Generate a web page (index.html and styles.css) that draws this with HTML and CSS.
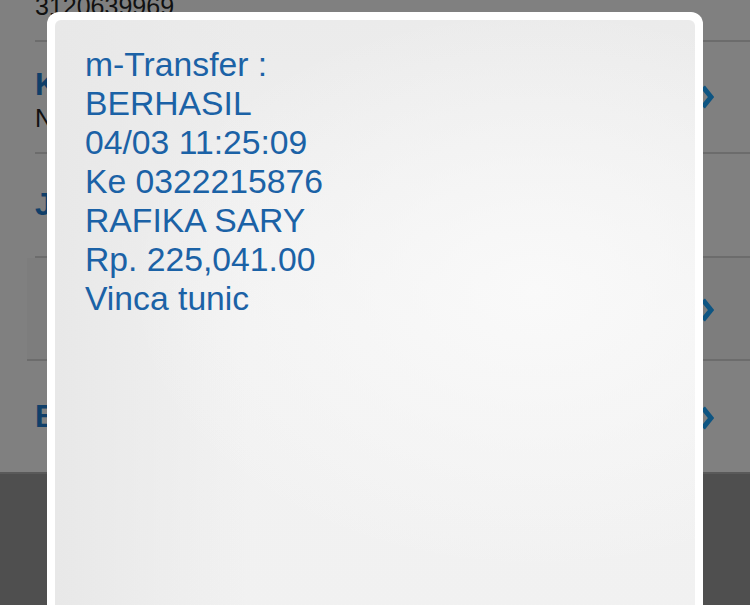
FILE: index.html
```html
<!DOCTYPE html>
<html>
<head>
<meta charset="utf-8">
<link rel="stylesheet" href="styles.css">
</head>
<body>
<div class="screen">
  <div class="list">
    <div class="row row-top"><span class="plain">3120639969</span></div>
    <div class="row row-a">
      <div class="texts">
        <div class="title">Kirim</div>
        <div class="plain">Nomor Rekening</div>
      </div>
      <svg class="chev" viewBox="0 0 14 24" width="14" height="24"><polyline points="3,2 11,12 3,22" fill="none" stroke="#0e5582" stroke-width="5"/></svg>
    </div>
    <div class="row row-b">
      <div class="texts"><div class="title">Jumlah</div></div>
    </div>
    <div class="row row-c">
      <div class="boxed"></div>
      <svg class="chev" viewBox="0 0 14 24" width="14" height="24"><polyline points="3,2 11,12 3,22" fill="none" stroke="#0e5582" stroke-width="5"/></svg>
    </div>
    <div class="row row-d">
      <div class="texts"><div class="title">Berita</div></div>
      <svg class="chev" viewBox="0 0 14 24" width="14" height="24"><polyline points="3,2 11,12 3,22" fill="none" stroke="#0e5582" stroke-width="5"/></svg>
    </div>
  </div>
  <div class="footer"></div>

  <div class="modal">
    <div class="panel">
      <p class="msg">m-Transfer :<br>BERHASIL<br>04/03 11:25:09<br>Ke 0322215876<br>RAFIKA SARY<br>Rp. 225,041.00<br>Vinca tunic</p>
    </div>
  </div>
</div>
</body>
</html>
```

FILE: styles.css
```css
html, body {
  margin: 0;
  padding: 0;
}
body {
  width: 750px;
  height: 605px;
  overflow: hidden;
  background: #808080;
  font-family: "Liberation Sans", Arial, sans-serif;
}
.screen {
  position: relative;
  width: 750px;
  height: 605px;
  display: flex;
  flex-direction: column;
}
.list {
  height: 472px;
  display: flex;
  flex-direction: column;
}
.row {
  display: flex;
  align-items: center;
  justify-content: space-between;
  margin-left: 35px;
  padding-right: 36px;
  box-sizing: border-box;
  border-bottom: 2px solid #6c6c6c;
}
.row-top {
  height: 42px;
  align-items: flex-start;
}
.row-top .plain {
  margin-top: -9px;
}
.row-a { height: 112px; }
.row-b { height: 104px; }
.row-c {
  height: 103px;
  margin-left: 27px;
  background: #7d7d7d;
  border-bottom: 2px solid #6c6c6c;
}
.row-d {
  height: 111px;
  border-bottom: none;
  margin-left: 35px;
}
.title {
  font-size: 31px;
  font-weight: bold;
  color: #103f69;
  line-height: 36px;
}
.plain {
  font-size: 25px;
  color: #111;
  line-height: 30px;
}
.row-a .texts { margin-top: 6px; }
.chev { display: block; }
.row-a .chev { margin-top: 0px; }
.row-c .chev { margin-top: 2px; }
.row-d .chev { margin-top: 2px; }
.footer {
  flex: 1;
  background: #4f4f4f;
  border-top: 2px solid #5a5a5a;
}
.modal {
  position: absolute;
  left: 47px;
  top: 12px;
  width: 656px;
  height: 620px;
  box-sizing: border-box;
  padding: 8px;
  background: #ffffff;
  border-radius: 12px;
}
.panel {
  height: 100%;
  border-radius: 6px;
  background:
    radial-gradient(ellipse at 75% 45%, rgba(250,250,250,0.9) 0%, rgba(250,250,250,0) 60%),
    linear-gradient(90deg, #e8e8e8 0%, rgba(240,240,240,0) 30%),
    linear-gradient(180deg, #ebebeb 0%, #f2f2f2 50%, #f1f1f1 100%);
  padding: 25px 30px;
  box-sizing: border-box;
}
.msg {
  margin: 0;
  font-size: 33.7px;
  line-height: 39px;
  color: #1b62a6;
}
```
